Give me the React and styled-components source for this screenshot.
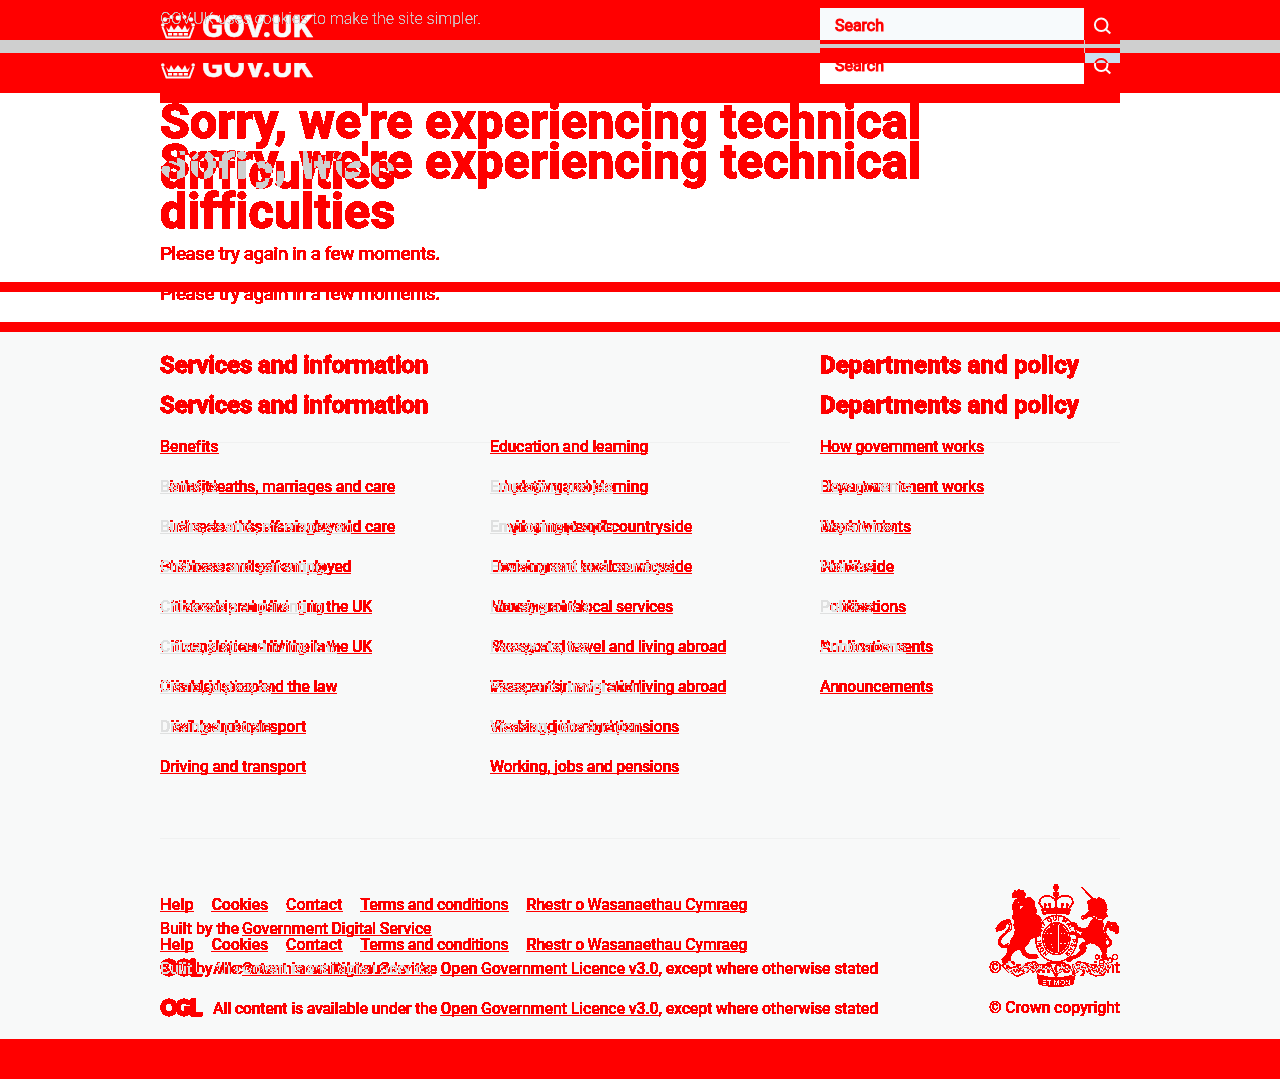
import React, { useLayoutEffect, useRef, useState } from "react";
import styled, { createGlobalStyle } from "styled-components";

const Global = createGlobalStyle`
  * { box-sizing: border-box; }
  body { margin: 0; background: #fff; font-family: Roboto, "Liberation Sans", sans-serif; font-size: 16px; }
  h1, h2, p, ul { margin: 0; padding: 0; }
  ul { list-style: none; }
`;

/* ---------- text set to a measured column width ---------- */
const Run = styled.span`
  display: inline-block;
  flex: none;
  white-space: nowrap;
  width: ${(p) => p.$w}px;
`;
const LinkRun = styled(Run)`
  text-decoration: underline;
  text-decoration-thickness: 1px;
  text-underline-offset: 1px;
  text-decoration-skip-ink: none;
`;
function Fit({ w, link, children }) {
  const ref = useRef(null);
  const [spacing, setSpacing] = useState(0);
  useLayoutEffect(() => {
    const range = document.createRange();
    range.selectNodeContents(ref.current);
    const natural = range.getBoundingClientRect().width;
    setSpacing((w - natural) / children.length);
  }, []);
  const Tag = link ? LinkRun : Run;
  return (
    <Tag ref={ref} $w={w} style={{ letterSpacing: spacing }}>
      {children}
    </Tag>
  );
}

/* ---------- diff filters ---------- */
const Defs = styled.svg`
  display: block;
  width: 0;
  height: 0;
  position: absolute;
`;
const HARD = "0 1 1 1 1 1 1";
const DiffFilter = ({ id, r, g, b }) => (
  <filter id={id} x="0" y="0" width="100%" height="100%" colorInterpolationFilters="sRGB">
    <feComponentTransfer>
      <feFuncR type="discrete" tableValues={HARD} />
      <feFuncG type="discrete" tableValues={HARD} />
    </feComponentTransfer>
    <feColorMatrix values=".5 .5 0 0 0  .5 .5 0 0 0  .5 .5 0 0 0  0 0 0 0 1" />
    <feComponentTransfer>
      <feFuncR type="table" tableValues={r} />
      <feFuncG type="table" tableValues={g} />
      <feFuncB type="table" tableValues={b} />
    </feComponentTransfer>
  </filter>
);

const Stack = styled.div`
  display: grid;
  & > * { grid-area: 1 / 1; min-width: 0; }
`;
const Diff = styled(Stack)`
  isolation: isolate;
  height: ${(p) => p.$h}px;
  filter: url(#${(p) => p.$filter});
`;
const Layer = styled.div`
  background: #000;
  color: ${(p) => (p.$after ? "#0f0" : "#f00")};
  padding-top: ${(p) => (p.$after ? 40 : 0)}px;
  mix-blend-mode: screen;
  overflow: hidden;
  height: ${(p) => p.$h}px;
`;
const Container = styled.div`
  width: 960px;
  margin: 0 auto;
`;

/* ---------- header ---------- */
const Band = styled.div`
  height: ${(p) => p.$h}px;
  background: ${(p) => p.$bg};
`;
const Row = styled(Container)`
  display: flex;
  justify-content: space-between;
  height: 100%;
`;
const Brand = styled.div`
  position: relative;
  display: flex;
  gap: 6px;
  padding-top: ${(p) => p.$top}px;
  height: 100%;
  color: #f8fafa;
`;
const BrandCut = styled.div`
  height: 30px;
  margin-top: 10px;
  overflow: hidden;
`;
const BrandName = styled.div`
  height: 30px;
  font: 700 31px/30px Roboto, "Liberation Sans", sans-serif;
  -webkit-text-stroke: 0.6px #f8fafa;
  margin-top: ${(p) => p.$shift || 0}px;
`;
const CrownShift = styled.div`
  margin-top: -13px;
`;
const Cookie = styled.div`
  position: absolute;
  left: 0;
  top: 9px;
  font-weight: 300;
  font-size: 16px;
  line-height: 20px;
  color: #cfcfcf;
  filter: url(#crisp);
`;
const SearchArea = styled.div`
  width: 300px;
  height: 100%;
  display: flex;
  align-items: ${(p) => p.$align};
`;
const Field = styled.div`
  width: 264px;
  height: ${(p) => p.$h}px;
  background: ${(p) => p.$bg};
  overflow: hidden;
`;
const FieldText = styled.div`
  margin: ${(p) => p.$top}px 0 0 15px;
  font-size: 16px;
  line-height: 20px;
  color: #f00;
  -webkit-text-stroke: 1px #f00;
`;
const Glass = styled.svg`
  width: 36px;
  height: 40px;
  display: block;
`;
const Strips = styled.div`
  width: 300px;
  background: linear-gradient(#f00 0 4px, #cfcfcf 4px 8px, #f00 8px);
  display: flex;
`;
const Hairline = styled.div`
  width: 1px;
  height: 13px;
  margin-left: 264px;
  background: #cfcfcf;
`;

const CrownMark = ({ cut }) => (
  <svg width="36" height="30" viewBox="0 0 36 30" fill="#f8fafa">
    {!cut && (
      <g>
        <circle cx="18" cy="8" r="2.4" />
        <circle cx="11.5" cy="7" r="2" />
        <circle cx="24.5" cy="7" r="2" />
        <circle cx="5" cy="9.5" r="2.2" />
        <circle cx="31" cy="9.5" r="2.2" />
      </g>
    )}
    <circle cx="2.8" cy="15" r="1.8" />
    <circle cx="33.2" cy="15" r="1.8" />
    <path d="M2.5 17l4 10.5h23l4-10.5" fill="none" stroke="#f8fafa" strokeWidth="2" />
    <path d="M6 17l3 3 2-5 3 5 4-5 4 5 3-5 2 5 3-3-2 5H8z" />
    <path d="M8 24.2h20" stroke="#f8fafa" strokeWidth="2.4" strokeDasharray="4 1.3" />
  </svg>
);

/* ---------- main ---------- */
const Title = styled.h1`
  font-size: 48px;
  font-weight: 700;
  line-height: 50px;
  margin-top: -6px;
  -webkit-text-stroke: 1.1px currentColor;
`;
const Lead = styled.p`
  font-size: 19px;
  font-weight: 500;
  line-height: 25px;
  margin-top: 44px;
`;
const Bars = styled.div`
  position: relative;
  display: flex;
  flex-direction: column;
  gap: 30px;
  padding-top: 179px;
`;
const Bar = styled.div`
  height: 10px;
  background: #f00;
`;
const MainLayer = ({ after }) => (
  <Layer $after={after} $h={229}>
    <Container>
      <Title>
        <Fit w={761}>Sorry, we're experiencing technical</Fit>
        <br />
        <Fit w={233}>difficulties</Fit>
      </Title>
      <Lead><Fit w={280}>Please try again in a few moments.</Fit></Lead>
    </Container>
  </Layer>
);

/* ---------- footer ---------- */
const services = [
  ["Benefits", 58], ["Births, deaths, marriages and care", 235], ["Business and self-employed", 191],
  ["Childcare and parenting", 164], ["Citizenship and living in the UK", 212], ["Crime, justice and the law", 177],
  ["Disabled people", 111], ["Driving and transport", 146],
];
const services2 = [
  ["Education and learning", 158], ["Employing people", 123], ["Environment and countryside", 202],
  ["Housing and local services", 183], ["Money and tax", 99], ["Passports, travel and living abroad", 236],
  ["Visas and immigration", 150], ["Working, jobs and pensions", 189],
];
const policy = [
  ["How government works", 164], ["Departments", 91], ["Worldwide", 74],
  ["Policies", 53], ["Publications", 86], ["Announcements", 113],
];
const Columns = styled.div`
  display: grid;
  grid-template-columns: 630px 300px;
  column-gap: 30px;
  padding-top: 18px;
  height: 512px;
`;
const Heading = styled.h2`
  font-size: 24px;
  font-weight: 700;
  line-height: 30px;
  margin-bottom: 57px;
  -webkit-text-stroke: 0.6px currentColor;
`;
const Lists = styled.div`
  display: grid;
  grid-template-columns: 300px 300px;
  gap: 30px;
`;
const List = styled.ul`
  display: flex;
  flex-direction: column;
  gap: 20px;
  font-weight: 500;
  line-height: 20px;
  li { height: 20px; }
`;
const Links = ({ items }) => (
  <List>{items.map(([t, w]) => <li key={t}><Fit w={w} link>{t}</Fit></li>)}</List>
);
const Meta = styled.div`
  display: flex;
  justify-content: space-between;
  align-items: flex-end;
  font-weight: 500;
`;
const MetaText = styled.div`
  margin-bottom: -2px;
`;
const MetaLine = styled.div`
  display: flex;
  gap: ${(p) => p.$gap || 0}px;
  height: 24px;
  line-height: 24px;
  margin-top: ${(p) => p.$top || 0}px;
`;
const Ogl = styled.div`
  width: 53px;
  margin-top: -1px;
  font: 900 23px/24px Inter, Roboto, sans-serif;
  -webkit-text-stroke: 0.4px currentColor;
`;
const Crest = styled.div`
  width: 131px;
`;
const ArmsBox = styled.div`
  height: 103px;
  padding-left: 5px;
  margin-bottom: 9px;
`;
const Copyright = styled.div`
  height: 23px;
  line-height: 24px;
`;
const Arms = () => (
  <svg width="126" height="103" viewBox="42 26 378 309" fill="currentColor" stroke="none">
    {/* lion */}
    <path d="M98 68L96 54l6-4 2-6 8 4 5-7 6 6 8-4 1 8 5 4-4 16-16-4z" />
    <path d="M104 60h26M109 54v6M118 50v8M127 54v6" stroke="#000" strokeWidth="3" strokeDasharray="5 4" />
    <path d="M98 88l8-16 20-6 10 3 14-4 8 8 5 3 1 18 7 10-4 12 10 6 8 10-4 10 6 8-8 10 5 8-4 10-14 8-14 6-8 14-8 6-2 10 6 10 14 6 14-1 8 9-8 4-22 0-16-10-6-9-6-10-14 7-12 14-1 20-10-3-6 8-8-6-2-9 8-7 10-14 0-14 8-12 2-14 10-12 2-16-4-14 4-12-8-8 2-14z" />
    <path d="M110 79l9 4M121 91l8 2-8 8z" stroke="#000" strokeWidth="3" fill="#000" />
    <path d="M88 208C55 222 53 196 68 183C88 167 100 154 86 139" fill="none" stroke="currentColor" strokeWidth="9" />
    <path d="M88 208C63 214 60 196 70 186C90 170 98 154 87 143" fill="none" stroke="#000" strokeWidth="3.5" />
    <path d="M88 130l-23 8-18 20 2 10 14-1 13-8 2-10 15-12z" />
    {/* royal crown */}
    <path d="M224 27h8v5h5v8h-5v7h-8v-7h-5v-8h5z" />
    <g fill="none" stroke="currentColor" strokeWidth="3.5">
      <path d="M190 102L178 84Q178 60 206 62Q222 66 228 78Q234 64 252 61Q280 60 278 84L266 102" />
      <path d="M228 46v56M196 102l-3-15M260 102l4-15M209 100v-10M247 100v-10" />
    </g>
    <path d="M221 50h14v12l-7 8-7-8zM192 85h7v8h-7zM206 84h7v8h-7zM243 84h7v8h-7zM258 85h7v8h-7z" />
    <path d="M184 102q44-10 88 0l-5 16q-39-8-78 0z" />
    <path d="M192 109q36-6 73 0" fill="none" stroke="#000" strokeWidth="3" strokeDasharray="6 3" />
    {/* garter */}
    <ellipse cx="229" cy="190" rx="62" ry="70" fill="none" stroke="currentColor" strokeWidth="3" />
    <ellipse cx="229" cy="190" rx="42" ry="49" fill="currentColor" />
    <path id="garter" d="M205 235A47 54 0 1 1 255 234" fill="none" />
    <text fontSize="17" fontWeight="400" letterSpacing="1.6" fontFamily="Liberation Sans, sans-serif">
      <textPath href="#garter">HONI SOIT QUI MAL Y PENSE</textPath>
    </text>
    <g stroke="#000" fill="none" strokeWidth="3.5">
      <ellipse cx="229" cy="190" rx="38" ry="44" />
      <path d="M192 188h29M236 188h30M222 148v82M235 148v82" />
      <path d="M199 164h19M200 174h18M204 157h14M241 164h18M241 174h20" strokeDasharray="6 4" />
      <path d="M199 204l8 13 9-15 2 17M239 204h22M240 215h16" strokeDasharray="8 3" />
    </g>
    {/* unicorn */}
    <path d="M304 36l6 2 37 37-7 3z" />
    <path d="M322 78l18-10 10 4 7-6 10 6 5 2 4 8 4 6 2 16-4 8 5 10-10 8-7 8 6 10-6 14 7 12 9 12-5 14-2 10 5 12-2 14 6 15-12 2-9-6 4-14-9-18-15-10-12-2-15 8 4 8-6 14-19 13-18 6-7 8-12-4 10-11 20-6 13-12-4-14 10-12 11-2-10-12-9 2-18-12-7 3-6-6 8-6 16 4 9 8 8-10-16-4-13-14-10-3 3-8 15 2 6 12 20 5 10-6 8-16 8-10-8-5-14 8-7-3 2-8 14-12z" />
    <path d="M336 88l10 2M322 128l18-4 14 8 12 1M330 118l28 12" fill="none" stroke="#000" strokeWidth="3" />
    <path d="M373 212C391 213 397 203 385 190C367 174 375 159 384 145" fill="none" stroke="currentColor" strokeWidth="8" />
    <path d="M373 212C386 209 388 201 382 193C367 178 373 160 383 149" fill="none" stroke="#000" strokeWidth="3" />
    <path d="M381 139l24 1 10 12 2 20-9 3-6-7-12-2-4-10-8 4z" />
    <path d="M390 148l10 6 5 10" stroke="#000" strokeWidth="3" fill="none" />
    <g fill="none" stroke="currentColor" strokeWidth="3">
      <circle cx="309" cy="127" r="5" /><circle cx="372" cy="182" r="5" />
      <circle cx="352" cy="245" r="6" /><circle cx="365" cy="260" r="7" />
      <circle cx="390" cy="255" r="7" /><circle cx="405" cy="245" r="8" />
    </g>
    {/* motto ribbon */}
    <g fill="none" stroke="currentColor" strokeWidth="3">
      <path d="M66 270l18-5 4 14 18-5 10 9 20-18 30-6 14 14-12 12-19-5-18 14-20 9-20-12-20-14z" />
      <path d="M95 286l16 6 24-16 20-7 14 6M154 260l25 46M164 258l18 24" strokeDasharray="9 3" />
      <path d="M394 270l-18-5-4 14-18-5-10 9-20-18-30-6-14 14 12 12 19-5 18 14 20 9 20-12 20-14z" />
      <path d="M365 286l-16 6-24-16-20-7-14 6M304 260l-25 46M294 258l-18 24" strokeDasharray="9 3" />
      <path d="M181 285l24-8 23 21 24-21 25 8M210 266l18 40 20-40M200 264h57" />
    </g>
    <path d="M171 298l12 2q46 14 91 0l12-2-7 30-24 4q-26 4-54 0l-24-4z" />
    <text x="186" y="329" fontSize="22" fontWeight="700" fill="#000" stroke="#000" strokeWidth="1.5" textLength="86" fontFamily="Liberation Sans, sans-serif">ET MON</text>
  </svg>
);
const FaintLines = styled.div`
  width: 960px;
  margin: 0 auto;
  padding-top: 110px;
  display: grid;
  grid-template-columns: 630px 300px;
  column-gap: 30px;
  row-gap: 395px;
  align-content: start;
  mix-blend-mode: multiply;
`;
const Faint = styled.div`
  height: 1px;
  background: #f7f7f7;
  grid-column: ${(p) => (p.$wide ? "1 / -1" : "auto")};
`;
const FooterLayer = ({ after }) => (
  <Layer $after={after} $h={707}>
    <Container>
      <Columns>
        <div>
          <Heading><Fit w={268}>Services and information</Fit></Heading>
          <Lists>
            <Links items={services} />
            <Links items={services2} />
          </Lists>
        </div>
        <div>
          <Heading><Fit w={259}>Departments and policy</Fit></Heading>
          <Links items={policy} />
        </div>
      </Columns>
      <Meta>
        <MetaText>
          <MetaLine $gap={18}>
            <Fit w={33.5} link>Help</Fit>
            <Fit w={56.5} link>Cookies</Fit>
            <Fit w={56.5} link>Contact</Fit>
            <Fit w={148} link>Terms and conditions</Fit>
            <Fit w={220.5} link>Rhestr o Wasanaethau Cymraeg</Fit>
          </MetaLine>
          <MetaLine $gap={3}>
            <Fit w={79}>Built by the</Fit>
            <Fit w={189.5} link>Government Digital Service</Fit>
          </MetaLine>
          <MetaLine $top={16}>
            <Ogl><Fit w={40}>OGL</Fit></Ogl>
            <Fit w={224}>All content is available under the</Fit>
            <MetaLine>
              <Run $w={3.5} />
              <Fit w={218} link>Open Government Licence v3.0</Fit>
            </MetaLine>
            <Fit w={219.5}>, except where otherwise stated</Fit>
          </MetaLine>
        </MetaText>
        <Crest>
          <ArmsBox>{after && <Arms />}</ArmsBox>
          <Copyright><Fit w={131}>© Crown copyright</Fit></Copyright>
        </Crest>
      </Meta>
    </Container>
  </Layer>
);

export default function App() {
  return (
    <>
      <Global />
      <Defs>
        <DiffFilter id="diff-main" r="1 1 .812" g="1 0 .812" b="1 0 .812" />
        <DiffFilter id="diff-footer" r=".973 1 .875" g=".98 0 .882" b=".98 0 .882" />
        <filter id="crisp" colorInterpolationFilters="sRGB">
          <feComponentTransfer><feFuncA type="discrete" tableValues="0 0 .75 .85 1" /></feComponentTransfer>
        </filter>
      </Defs>
      <header>
        <Band $h={40} $bg="#f00">
          <Row>
            <Brand $top={10}>
              <CrownMark />
              <BrandName $shift={2}><Fit w={111}>GOV.UK</Fit></BrandName>
              <Cookie><Fit w={321}>GOV.UK uses cookies to make the site simpler.</Fit></Cookie>
            </Brand>
            <SearchArea $align="flex-end">
              <Field $h={32} $bg="#f7fafc"><FieldText $top={8}><Fit w={49}>Search</Fit></FieldText></Field>
              <Glass viewBox="0 0 36 40" fill="none" stroke="#f8fafa" strokeWidth="2">
                <circle cx="17.2" cy="24.8" r="6.3" /><path d="M22 29.5l4.3 4" />
              </Glass>
            </SearchArea>
          </Row>
        </Band>
        <Band $h={13} $bg="#cfcfcf">
          <Row><span /><Strips><Hairline /></Strips></Row>
        </Band>
        <Band $h={40} $bg="#f00">
          <Row>
            <Brand $top={0}>
              <BrandCut><CrownShift><CrownMark cut /></CrownShift></BrandCut>
              <BrandCut><BrandName $shift={-11}><Fit w={111}>GOV.UK</Fit></BrandName></BrandCut>
            </Brand>
            <SearchArea $align="flex-start">
              <BrandCut><Field $h={21} $bg="#fff"><FieldText $top={-7}><Fit w={49}>Search</Fit></FieldText></Field></BrandCut>
              <Glass viewBox="0 13 36 40" fill="none" strokeWidth="2">
                <path d="M1 13h35v10H1z" fill="#cadfee" />
                <circle cx="17.2" cy="24.8" r="6.3" stroke="#fff" /><path d="M22 29.5l4.3 4" stroke="#fff" />
                <path d="M11.3 23A6.3 6.3 0 0 1 23.1 23" stroke="#f00" />
              </Glass>
            </SearchArea>
          </Row>
        </Band>
        <Container><Bar /></Container>
      </header>
      <Stack as="main">
        <Diff $filter="diff-main" $h={229}>
          <MainLayer />
          <MainLayer after />
        </Diff>
        <Bars><Bar /><Bar /></Bars>
      </Stack>
      <Stack as="footer">
        <Diff $filter="diff-footer" $h={707}>
          <FooterLayer />
          <FooterLayer after />
        </Diff>
        <FaintLines><Faint /><Faint /><Faint $wide /></FaintLines>
      </Stack>
      <Band $h={40} $bg="#f00" />
    </>
  );
}
